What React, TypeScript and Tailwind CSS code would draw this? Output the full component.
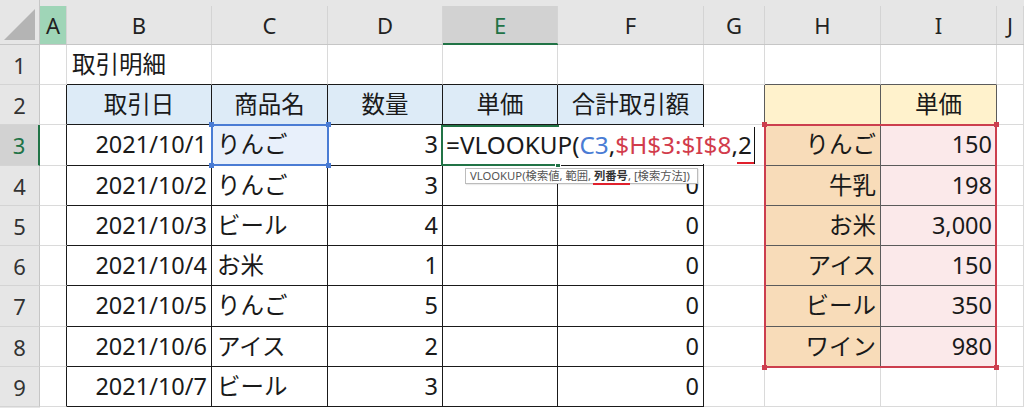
import React from 'react';

type B = 'g' | 'k' | 'd';
const RB: Record<B, string> = { g: 'border-r-[#dadada]', k: 'border-r-[#1a1a1a]', d: 'border-r-[#5b5b5b]' };
const BB: Record<B, string> = { g: 'border-b-[#dadada]', k: 'border-b-[#1a1a1a]', d: 'border-b-[#5b5b5b]' };
const AL = { l: 'justify-start pl-[5px]', r: 'justify-end pr-[4px]', c: 'justify-center' };

type C = { t: string; a: 'l' | 'r' | 'c' };
const LETTERS = ['A', 'B', 'C', 'D', 'E', 'F', 'G', 'H', 'I', 'J'];

const dates = ['2021/10/1', '2021/10/2', '2021/10/3', '2021/10/4', '2021/10/5', '2021/10/6', '2021/10/7'];
const items = ['りんご', 'りんご', 'ビール', 'お米', 'りんご', 'アイス', 'ビール'];
const qty = ['3', '3', '4', '1', '5', '2', '3'];
const master = [
  ['りんご', '150'],
  ['牛乳', '198'],
  ['お米', '3,000'],
  ['アイス', '150'],
  ['ビール', '350'],
  ['ワイン', '980'],
];

function content(r: number, c: number): C | null {
  if (r === 1 && c === 2) return { t: '取引明細', a: 'l' };
  if (r === 2) {
    const h: Record<number, string> = { 2: '取引日', 3: '商品名', 4: '数量', 5: '単価', 6: '合計取引額', 9: '単価' };
    if (h[c]) return { t: h[c], a: 'c' };
    return null;
  }
  if (r >= 3 && r <= 9) {
    const i = r - 3;
    if (c === 2) return { t: dates[i], a: 'r' };
    if (c === 3) return { t: items[i], a: 'l' };
    if (c === 4) return { t: qty[i], a: 'r' };
    if (c === 6 && r > 3) return { t: '0', a: 'r' };
    if (r <= 8 && c === 8) return { t: master[i][0], a: 'r' };
    if (r <= 8 && c === 9) return { t: master[i][1], a: 'r' };
  }
  return null;
}

function rb(r: number, c: number): B {
  if (r >= 2 && r <= 9 && c >= 1 && c <= 6) return 'k';
  if (r >= 2 && r <= 8 && c >= 7 && c <= 9) return 'd';
  return 'g';
}
function bb(r: number, c: number): B {
  if (r >= 1 && r <= 9 && c >= 2 && c <= 6) return 'k';
  if (r >= 1 && r <= 8 && c >= 8 && c <= 9) return 'd';
  return 'g';
}
function bg(r: number, c: number): string {
  if (r === 2 && c >= 2 && c <= 6) return 'bg-[#ddebf7]';
  if (r === 2 && c >= 8 && c <= 9) return 'bg-[#fff2cc]';
  if (r >= 3 && r <= 8 && c === 8) return 'bg-[#f8dcb9]';
  if (r >= 3 && r <= 8 && c === 9) return 'bg-[#fbe9ea]';
  if (r === 3 && c === 3) return 'bg-[#e8f0fb]';
  return 'bg-white';
}

function SelBox({ cls, color }: { cls: string; color: string }) {
  // selection rectangle with square handles at its four corners
  return (
    <div className={`absolute border-2 ${cls} ${color}`}>
      <div className="absolute -left-[4px] -top-[4px] w-[5px] h-[5px] bg-current" />
      <div className="absolute -right-[4px] -top-[4px] w-[5px] h-[5px] bg-current" />
      <div className="absolute -left-[4px] -bottom-[4px] w-[5px] h-[5px] bg-current" />
      <div className="absolute -right-[4px] -bottom-[4px] w-[5px] h-[5px] bg-current" />
    </div>
  );
}

export default function App() {
  const cells: React.ReactNode[] = [];
  cells.push(
    <div key="corner" className="bg-[#e6e6e6] border-r border-r-[#c6c6c6] border-b border-b-[#c6c6c6] flex items-end justify-end pr-[3px] pb-[3px]">
      <svg width="32" height="32" viewBox="0 0 32 32">
        <polygon points="31,0 31,31 0,31" fill="#b4b4b4" />
      </svg>
    </div>
  );
  LETTERS.forEach((L, i) => {
    const c = i + 1;
    const isA = c === 1;
    const isE = c === 5;
    cells.push(
      <div
        key={'h' + L}
        className={`bg-[#e6e6e6] pt-[6px] border-b ${isE ? 'border-b-[#217346]' : 'border-b-[#c6c6c6]'}`}
      >
        <div
          className={`h-full flex items-center justify-center border-r border-r-[#d4d4d4] text-[22px] leading-none ${
            isA ? 'bg-[#9fd5b7] text-[#222]' : isE ? 'bg-[#d2d2d2] text-[#217346] border-b border-b-[#217346]' : 'text-[#222]'
          }`}
        >
          {L}
        </div>
      </div>
    );
  });
  for (let r = 1; r <= 9; r++) {
    const sel = r === 3;
    cells.push(
      <div
        key={'r' + r}
        className={`flex items-center justify-center text-[22px] leading-none border-b border-b-[#d4d4d4] ${
          sel
            ? 'bg-[#d2d2d2] text-[#217346] border-r-2 border-r-[#217346]'
            : 'bg-[#e6e6e6] text-[#333] border-r border-r-[#c6c6c6]'
        }`}
      >
        {r}
      </div>
    );
    for (let c = 1; c <= 10; c++) {
      const ct = content(r, c);
      cells.push(
        <div
          key={`c${r}-${c}`}
          className={`flex items-center whitespace-nowrap text-[23.5px] leading-none text-[#1a1a1a] border-r border-b ${RB[rb(r, c)]} ${BB[bb(r, c)]} ${bg(r, c)} ${ct ? AL[ct.a] : ''}`}
        >
          {ct ? ct.t : null}
        </div>
      );
    }
  }
  cells.push(<div key="lastA" className="bg-[#e6e6e6]" />);
  cells.push(<div key="lastB" className="col-span-10 bg-white" />);

  return (
    <div className="relative w-[1024px] h-[408px] overflow-hidden bg-white font-['Noto_Sans','Noto_Sans_CJK_JP',sans-serif]">
      <div className="grid grid-cols-[40px_27px_145px_116px_115px_115px_146px_61px_116px_116px_1fr] grid-rows-[45px_40px_40px_41px_40px_40px_40px_41px_40px_40px_1fr] h-[408px]">
        {cells}
      </div>

      {/* C3 reference highlight */}
      <SelBox cls="left-[211px] top-[124px] w-[118px] h-[42px]" color="border-[#4a7cd4] text-[#4a7cd4]" />

      {/* H3:I8 range highlight */}
      <SelBox cls="left-[764px] top-[124px] w-[233px] h-[244px]" color="border-[#cc3f4e] text-[#cc3f4e]" />

      {/* active cell E3 */}
      <div className="absolute left-[441px] top-[125px] w-[118px] h-[41px] border-2 border-[#217346]">
        <div className="absolute -right-[4px] -bottom-[4px] w-[6px] h-[6px] bg-[#217346] border border-white" />
      </div>

      {/* in-cell edit box */}
      <div className="absolute left-[443px] top-[127px] w-[312px] h-[37px] bg-white flex items-center pl-[3px] whitespace-nowrap text-[24.3px] leading-none text-[#1a1a1a] border-r border-r-[#111]">
        <span>=VLOOKUP(</span>
        <span className="text-[#4a7cd4]">C3</span>
        <span>,</span>
        <span className="text-[#d23c4c]">$H$3:$I$8</span>
        <span>,</span>
        <span className="relative">
          2
          <span className="absolute left-[-1px] right-[-2px] bottom-[-6px] h-[2px] bg-[#e0202c]" />
        </span>
      </div>

      {/* function tooltip */}
      <div className="absolute left-[465px] top-[168px] w-[233px] h-[16px] bg-white border border-[#bcbcbc] pl-[4px] whitespace-nowrap text-[11.3px] leading-[14px] text-[#555] shadow-[1px_1px_1px_rgba(0,0,0,0.08)]">
        VLOOKUP(検索値, 範囲,{' '}
        <span className="relative font-bold text-[#333]">
          列番号
          <span className="absolute left-[-1px] right-[-2px] bottom-[-2px] h-[2px] bg-[#e0202c]" />
        </span>
        , [検索方法])
      </div>
    </div>
  );
}
